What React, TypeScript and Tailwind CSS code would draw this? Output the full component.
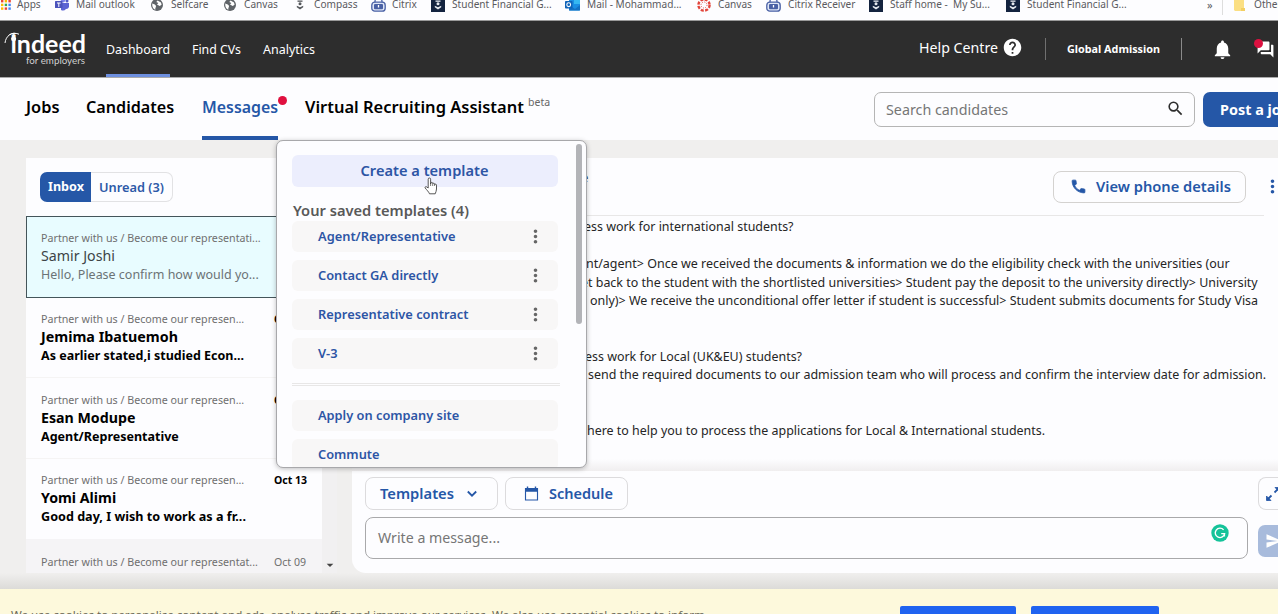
import type { ReactNode } from "react";
import { MdHelp, MdMoreVert, MdNotifications, MdQuestionAnswer, MdSearch, MdSend, MdArrowDropDown } from "react-icons/md";

function Globe() {
  return (
    <svg viewBox="0 0 12 12" className="size-3">
      <circle cx="6" cy="6" r="6" fill="#5f6368" />
      <path d="M1.2 4.5C3 5 5 5.6 5 7.2c0 1-1 1.6-.6 3.600C2.400 10.100 1 8.200 1.200 4.500ZM6.500 1.400 10 3.500l.6 2.200L8.700 7 6 5.500 7.400 4 5.300 3Z" fill="#fff" />
    </svg>
  );
}

function Apps() {
  const colors = ["#ea4335", "#fbbc04", "#ea4335", "#fbbc04", "#34a853", "#4285f4", "#fbbc04", "#ea4335", "#4285f4"];
  return (
    <svg viewBox="0 0 10 10" className="size-[10px]">
      {colors.map((c, i) => (
        <rect key={i} x={(i % 3) * 3.7} y={Math.floor(i / 3) * 3.7} width="2.4" height="2.4" fill={c} />
      ))}
    </svg>
  );
}

function Teams() {
  return (
    <svg viewBox="0 0 14 13" className="h-[13px] w-[14px]">
      <circle cx="12" cy="3" r="1.500" fill="#5059c9" />
      <circle cx="8" cy="2.200" r="2.200" fill="#7b83eb" />
      <path d="M6 5h8v4a3 3 0 0 1-3 2 4 4 0 0 1-5 1Z" fill="#5b63d3" />
      <rect y="3" width="7.500" height="7" rx=".6" fill="#4b53bc" />
      <path d="M2 5h3.600M3.800 5v4" stroke="#fff" />
    </svg>
  );
}

function Crest({ dark }: { dark?: boolean }) {
  return (
    <svg viewBox="0 0 14 14" className="size-[14px]">
      {dark && <rect width="14" height="14" fill="#13233f" />}
      <g fill={dark ? "#e6eaf0" : "#55585c"}>
        <rect x="4.500" y="2.500" width="5" height="1.300" />
        <circle cx="7" cy="5.800" r="1.500" />
        <path d="m3.800 7.800 3.200 1.400 3.200-1.400v1.500L7 11.500 3.800 9.300Z" />
      </g>
    </svg>
  );
}

function Lock() {
  return (
    <svg viewBox="0 0 15 14" className="h-[14px] w-[15px]">
      <path d="M4 5V3.500a3.500 3.500 0 0 1 7 0V5" fill="none" stroke="#6479b5" strokeWidth="1.500" />
      <rect x=".8" y="4.200" width="13.400" height="9" rx="3" fill="#dfe6f6" stroke="#4a61a5" strokeWidth="1.300" />
      <rect x="3" y="6" width="9" height="5.300" rx="1" fill="#4a61a5" />
      <path d="M7.500 7v2.500" stroke="#fff" strokeWidth="1.300" />
    </svg>
  );
}

function Outlook() {
  return (
    <svg viewBox="0 0 15 13" className="h-[13px] w-[15px]">
      <rect x="4" width="11" height="12.500" rx="1" fill="#1a8fe3" />
      <path d="M9 0h6v6H9Z" fill="#35b8f1" />
      <path d="m4 7 6 4 5-4v5.500H4Z" fill="#1272c4" />
      <rect y="3" width="7.500" height="7.500" rx=".8" fill="#0f63b8" />
      <circle cx="3.700" cy="6.700" r="1.900" fill="none" stroke="#fff" strokeWidth="1.100" />
    </svg>
  );
}

function CanvasLogo() {
  return (
    <svg viewBox="0 0 14 14" className="size-[14px]">
      <circle cx="7" cy="7" r="5.600" fill="none" stroke="#e2443a" strokeWidth="2.400" strokeDasharray="3 1.398" />
      <circle cx="7" cy="7" r="3" fill="none" stroke="#e2443a" strokeWidth="1" strokeDasharray="1 1.356" />
    </svg>
  );
}

function Folder() {
  return (
    <svg viewBox="0 0 12 13" className="h-[13px] w-3">
      <path d="M1 0h10v9l1 1v2H2l-1-1Z" fill="#fbdf83" />
      <path d="M8 12V9h4v3Z" fill="#f3cf62" />
    </svg>
  );
}

type Mark = { icon: ReactNode; label: string; cell: string; text: string };
const marks: Mark[] = [
  { icon: <Apps />, label: "Apps", cell: "w-[54px]", text: "ml-[6px]" },
  { icon: <Teams />, label: "Mail outlook", cell: "w-[96px]", text: "ml-[7px]" },
  { icon: <Globe />, label: "Selfcare", cell: "w-[73px]", text: "ml-[8px]" },
  { icon: <Globe />, label: "Canvas", cell: "w-[69px]", text: "ml-[8px]" },
  { icon: <Crest />, label: "Compass", cell: "w-[78px]", text: "ml-[7px]" },
  { icon: <Lock />, label: "Citrix", cell: "w-[60px]", text: "ml-[6px]" },
  { icon: <Crest dark />, label: "Student Financial G...", cell: "w-[134px]", text: "ml-[7px]" },
  { icon: <Outlook />, label: "Mail - Mohammad...", cell: "w-[132px]", text: "ml-[7px]" },
  { icon: <CanvasLogo />, label: "Canvas", cell: "w-[69px]", text: "ml-[7px]" },
  { icon: <Lock />, label: "Citrix Receiver", cell: "w-[103px]", text: "ml-[7px]" },
  { icon: <Crest dark />, label: "Staff home -  My Su...", cell: "w-[137px]", text: "ml-[7px]" },
  { icon: <Crest dark />, label: "Student Financial G...", cell: "w-[201px]", text: "ml-[7px]" },
];

function Bookmarks() {
  return (
    <div className="h-[21px] overflow-hidden border-b border-[#9a9a9a] bg-[#fdfdff]">
      <div className="-mt-[5px] flex h-[20px] items-center whitespace-pre pl-px text-[10.100px] text-[#5a5a5e]">
        {marks.map((m, i) => (
          <div key={i} className={`flex shrink-0 items-center ${m.cell}`}>
            <span className="shrink-0">{m.icon}</span>
            <span className={m.text}>{m.label}</span>
          </div>
        ))}
        <span className="w-[15px] shrink-0 text-[11px]">»</span>
        <span className="h-5 w-px shrink-0 bg-[#ddd]" />
        <span className="ml-[10px] shrink-0"><Folder /></span>
        <span className="ml-[9px] shrink-0">Other bookmarks</span>
      </div>
    </div>
  );
}

function Logo() {
  return (
    <svg viewBox="0 0 84 38" className="h-[38px] w-[84px]" fill="#fff">
      <path d="M1 12C1.800 5 7.500.2 15 3.200" fill="none" stroke="#fff" strokeWidth="1" />
      <path d="M4 5C7 1.200 11 .8 15 3.200 11 2.400 7 2.800 4 5Z" />
      <circle cx="9.600" cy="7.800" r="2.500" />
      <text x="6.500" y="22" textLength="75.500" lengthAdjust="spacingAndGlyphs" fontSize="24" fontWeight="700" fontFamily="Lato, sans-serif">indeed</text>
      <text x="22" y="33" textLength="59" lengthAdjust="spacingAndGlyphs" fontSize="9.500" fill="#cfcfcf" fontFamily="Lato, sans-serif">for employers</text>
    </svg>
  );
}

function TopNav() {
  return (
    <header className="flex h-[57px] items-stretch whitespace-nowrap border-b border-[#aaa] bg-[#2d2d2d] text-white">
      <div className="w-[106px] pl-1 pt-[10px]"><Logo /></div>
      <div className="flex w-[64px] items-center border-b-[3px] border-[#6d8fdf] text-[12.400px]"><span className="pt-[5px]">Dashboard</span></div>
      <div className="ml-[22px] flex w-[49px] items-center pt-[2px] text-[12.350px]">Find CVs</div>
      <div className="ml-[22px] flex items-center pt-[2px] text-[12.500px]">Analytics</div>
      <div className="ml-auto flex items-center">
        <div className="flex w-[126px] items-center text-[14.200px]">
          <span className="w-[83px] -translate-y-px">Help Centre</span>
          <MdHelp className="size-[21px] -translate-y-px" />
        </div>
        <span className="h-[22px] w-px bg-[#707070]" />
        <b className="ml-[21px] w-[93px] text-[10.800px] font-bold">Global Admission</b>
        <span className="ml-[21px] h-[22px] w-px bg-[#8a8a8a]" />
        <MdNotifications className="ml-[29px] size-[23px]" />
        <span className="relative ml-[22px] mr-[3px] block size-[19px]">
          <MdQuestionAnswer className="size-[19px]" />
          <i className="absolute -left-[2px] -top-px size-[9px] rounded-full bg-[#dc1140]" />
        </span>
      </div>
    </header>
  );
}

function SubNav() {
  return (
    <nav className="flex h-[62px] items-stretch whitespace-nowrap bg-[#fdfdff] pl-[26px] font-semibold leading-[58px] text-black">
      <span className="w-[60px] text-[16.400px]">Jobs</span>
      <span className="w-[116px] text-[16.150px]">Candidates</span>
      <span className="relative w-[76px] border-b-4 border-[#2557a7] text-[15.900px] text-[#2557a7]">
        Messages
        <i className="absolute -right-[9px] top-[18px] size-[9px] rounded-full bg-[#e0103f]" />
      </span>
      <span className="ml-[27px] w-[223px] text-[16.480px]">Virtual Recruiting Assistant</span>
      <span className="text-[10.500px] font-normal leading-[48px] text-[#666]">beta</span>
      <div className="ml-auto flex items-start pt-[14px] leading-normal">
        <div className="flex h-[35px] w-[321px] items-center justify-between rounded-[7px] border border-[#b5b5b5] pl-[11px] pr-[9px] text-[14.300px] font-normal text-[#767676]">
          <span className="pt-px">Search candidates</span>
          <MdSearch className="size-[19px] -translate-y-px text-[#2d2d2d]" />
        </div>
        <div className="ml-[8px] h-[35px] w-[75px] overflow-hidden rounded-l-[7px] bg-[#2557a7] pl-[17px] text-[14.400px] font-bold leading-[35px] text-white">Post a job</div>
      </div>
    </nav>
  );
}

type Conversation = { subject: string; name: string; preview: string; date: string; unread: boolean; box: string; nameSize: string; previewSize: string };
const conversations: Conversation[] = [
  { subject: "Partner with us / Become our representati...", name: "Samir Joshi", preview: "Hello, Please confirm how would yo...", date: "", unread: false, box: "h-[82px] border border-[#44555a] bg-[#e8fcff] pl-[14px] pt-[12px]", nameSize: "text-[14.200px]", previewSize: "text-[12.480px]" },
  { subject: "Partner with us / Become our represen...", name: "Jemima Ibatuemoh", preview: "As earlier stated,i studied Econ...", date: "Oct 13", unread: true, box: "h-[80px] border-b border-[#f5f4f4] pl-[15px] pt-[12px]", nameSize: "text-[14.290px]", previewSize: "text-[12.500px]" },
  { subject: "Partner with us / Become our represen...", name: "Esan Modupe", preview: "Agent/Representative", date: "Oct 13", unread: true, box: "h-[81px] border-b border-[#f5f4f4] pl-[15px] pt-[13px]", nameSize: "text-[14.200px]", previewSize: "text-[12.530px]" },
  { subject: "Partner with us / Become our represen...", name: "Yomi Alimi", preview: "Good day, I wish to work as a fr...", date: "Oct 13", unread: true, box: "h-[80px] pl-[15px] pt-[12px]", nameSize: "text-[14.200px]", previewSize: "text-[12.610px]" },
  { subject: "Partner with us / Become our representat...", name: "", preview: "", date: "Oct 09", unread: false, box: "h-[34px] bg-[#f5f4f6] pl-[15px] pt-[14px]", nameSize: "text-[14px]", previewSize: "text-[12px]" },
];

function Inbox() {
  return (
    <aside className="h-[415px] w-[296px] shrink-0 overflow-hidden whitespace-nowrap bg-[#fdfdff]">
      <div className="flex h-[58px] items-start pl-[14px] pt-[14px]">
        <div className="flex h-[30px] w-[133px] leading-[28px]">
          <b className="w-[51px] rounded-l-[7px] bg-[#2557a7] pl-[8px] text-[12.610px] font-bold leading-[30px] text-white">Inbox</b>
          <span className="flex-1 rounded-r-[7px] border border-l-0 border-[#e2e2e4] pl-[8px] text-[12.810px] font-semibold text-[#2d5aa8]">Unread (3)</span>
        </div>
      </div>
      {conversations.map((c, i) => (
        <div key={i} className={`overflow-hidden ${c.box}`}>
          <div className="flex h-[18px] items-center text-[10.700px] text-[#6f6f6f]">
            <span className="w-[233px] shrink-0">{c.subject}</span>
            <span className={c.unread ? "pt-[2px] text-[10.500px] font-bold text-black" : "pt-[2px] text-[10.570px]"}>{c.date}</span>
          </div>
          <div className={`h-[17px] leading-[17px] ${c.nameSize} ${c.unread ? "font-bold text-black" : "text-[#3d4447]"}`}>{c.name}</div>
          <div className={`h-[22px] leading-[22px] ${c.previewSize} ${c.unread ? "font-bold text-black" : "text-[#6b7376]"}`}>{c.preview}</div>
        </div>
      ))}
    </aside>
  );
}

const lines: { text: string; className: string }[] = [
  { text: "ess work for international students?", className: "pl-[232px]" },
  { text: "", className: "" },
  { text: "nt/agent> Once we received the documents & information we do the eligibility check with the universities (our", className: "pl-[234px] text-[12.490px]" },
  { text: "et back to the student with the shortlisted universities> Student pay the deposit to the university directly> University", className: "pl-[229px]" },
  { text: "only)> We receive the unconditional offer letter if student is successful> Student submits documents for Study Visa", className: "pl-[238px] text-[12.480px]" },
  { text: "", className: "" },
  { text: "", className: "" },
  { text: "ess work for Local (UK&EU) students?", className: "pl-[233px]" },
  { text: "send the required documents to our admission team who will process and confirm the interview date for admission.", className: "pl-[236px] text-[12.480px]" },
  { text: "", className: "" },
  { text: "", className: "" },
  { text: "here to help you to process the applications for Local & International students.", className: "pl-[235px]" },
];

function Thread() {
  return (
    <main className="flex h-[415px] w-[926px] shrink-0 flex-col overflow-hidden whitespace-nowrap rounded-bl-[14px] bg-[#fdfdff]">
      <div className="flex h-[57px] shrink-0 items-center justify-end">
        <span className="mr-auto pb-[17px] pl-[229px] text-[13px] text-[#333]">e</span>
        <div className="flex h-[32px] w-[193px] items-center rounded-[8px] border border-[#d4d2d0] pl-[16px] text-[14.680px] font-semibold text-[#2557a7]">
          <svg viewBox="0 0 24 24" className="mr-[9px] size-[17px]" fill="currentColor" stroke="currentColor" strokeWidth="1.200"><path d="M6.620 10.790c1.440 2.830 3.760 5.140 6.590 6.590l2.200-2.200c.27-.27.67-.36 1.020-.24 1.120.37 2.330.57 3.570.57.55 0 1 .45 1 1V20c0 .55-.45 1-1 1C10.610 21 3 13.390 3 4c0-.55.45-1 1-1h3.500c.55 0 1 .45 1 1 0 1.250.2 2.450.57 3.570.11.35.03.74-.25 1.020l-2.200 2.200Z" /></svg>
          View phone details
        </div>
        <MdMoreVert className="-mr-[5px] ml-[16px] size-[21px] text-[#2557a7]" />
      </div>
      <div className="mr-[14px] h-px shrink-0 bg-[#e8e7e7]" />
      <div className="h-[243px] shrink-0 pt-[2px] text-[12.450px] text-[#252525]">
        {lines.map((l, i) => (
          <div key={i} className={`h-[18.500px] leading-[18.500px] ${l.className}`}>{l.text}</div>
        ))}
      </div>
      <div className="h-[12px] shrink-0 bg-linear-to-b from-[#fdfdff] to-[#f0eeef]" />
      <div className="flex h-[39px] shrink-0 items-start pl-[13px] pt-[6px] text-[#2557a7]">
        <div className="flex h-[33px] w-[133px] items-center rounded-[8px] border border-[#dcdbdd] pl-[14px] text-[14.740px] font-semibold">
          Templates
          <svg viewBox="0 0 12 8" className="ml-[12px] h-[8px] w-3"><path d="m1.800 1.500 4.200 4.200 4.200-4.200" fill="none" stroke="currentColor" strokeWidth="1.800" /></svg>
        </div>
        <div className="ml-[7px] flex h-[33px] w-[123px] items-center rounded-[8px] border border-[#dcdbdd] pl-[18px] text-[14.520px] font-semibold">
          <svg viewBox="0 0 16 16" className="mr-[10px] size-[15px]" fill="currentColor"><path d="M1 2h2V.5h1.500V2h7V.5H13V2h2v13.500H1ZM2.200 6v8.400h11.600V6Z" fillRule="evenodd" /></svg>
          Schedule
        </div>
        <div className="ml-auto flex h-[33px] w-[20px] items-center overflow-hidden rounded-l-[8px] border border-r-0 border-[#dcdbdd] pl-[6px]">
          <svg viewBox="0 0 16 16" className="size-[16px] shrink-0" fill="currentColor" stroke="currentColor" strokeWidth="1.800"><path d="m9.500 6.500 4.500-4.500M6.500 9.500 2 14" /><path d="M10 1.500h4.500V6ZM6 14.500H1.500V10Z" strokeWidth=".8" /></svg>
        </div>
      </div>
      <div className="flex shrink-0 pl-[13px] pt-[7px]">
        <div className="flex h-[42px] w-[883px] items-center justify-between rounded-[8px] border border-[#a9a9ab] pl-[12px] pr-[18px] text-[14.190px] text-[#767676]">
          <span>Write a message...</span>
          <svg viewBox="0 0 18 18" className="size-[18px] -translate-y-[5px]"><circle cx="9" cy="9" r="8.700" fill="#15c39a" /><path d="M12.600 5.900A4.700 4.700 0 1 0 13.600 9.600H10.200M13.400 9.600v3" fill="none" stroke="#fff" strokeWidth="1.400" /></svg>
        </div>
        <div className="ml-[10px] mt-[8px] flex h-[32px] w-[20px] items-center overflow-hidden rounded-l-[7px] bg-[#a8bbdc] pl-[7px]">
          <MdSend className="size-[18px] shrink-0 text-white" />
        </div>
      </div>
    </main>
  );
}

function TemplateRow({ label, menu, size }: { label: string; menu?: boolean; size: string }) {
  return (
    <div className="mb-[8px] flex h-[31px] w-[266px] shrink-0 items-center justify-between rounded-[6px] bg-[#f8f7f7] pl-[26px] pr-[12px] font-semibold text-[#2d55a5]">
      <span className={size}>{label}</span>
      {menu && <MdMoreVert className="size-[21px] text-[#666]" />}
    </div>
  );
}

function TemplatesPopup() {
  return (
    <section className="absolute left-[276px] top-[140px] flex h-[328px] w-[311px] flex-col overflow-hidden whitespace-nowrap rounded-[7px] border border-[#a8a8ab] bg-[#fdfdff] pl-[15px] pt-[14px] shadow-[0_1px_5px_rgba(0,0,0,0.25)]">
      <div className="flex h-[32px] w-[266px] shrink-0 items-center justify-center rounded-[6px] bg-[#eceefd] pr-px text-[14.620px] font-semibold text-[#2d55a5]">Create a template</div>
      <div className="h-[34px] shrink-0 pl-px pt-[13px] text-[14.660px] font-semibold leading-[20px] text-[#595959]">Your saved templates (4)</div>
      <TemplateRow label="Agent/Representative" menu size="text-[12.850px]" />
      <TemplateRow label="Contact GA directly" menu size="text-[12.850px]" />
      <TemplateRow label="Representative contract" menu size="text-[12.850px]" />
      <TemplateRow label="V-3" menu size="text-[12.850px]" />
      <div className="mb-[14px] mt-[6px] h-[3px] w-[268px] shrink-0 border-y border-[#e8e7e7]" />
      <TemplateRow label="Apply on company site" size="text-[12.800px]" />
      <TemplateRow label="Commute" size="text-[12.800px]" />
      <i className="absolute right-[4px] top-[3px] h-[180px] w-[6px] rounded-full bg-[#b3b4b8]" />
    </section>
  );
}

function Pointer() {
  return (
    <svg viewBox="0 0 14 18" className="absolute left-[424px] top-[177px] h-[18px] w-[14px]">
      <path d="M4.200 11V2.200a1.200 1.200 0 0 1 2.400 0V7l.2-1a1 1 0 0 1 1.900.2v.6a1 1 0 0 1 1.900.2v.7a1 1 0 0 1 1.900.4V12c0 2-.8 3-1.300 4.800H5.500C4.800 14.800 2.500 12.800 1.200 11c-.6-1 .6-1.800 1.500-1.100Z" fill="#fff" stroke="#444" strokeWidth=".9" />
      <path d="M6.600 6v3M8.700 7v2M10.600 7.500V9" stroke="#444" strokeWidth=".7" />
    </svg>
  );
}

export default function App() {
  return (
    <div className="relative h-[614px] w-[1278px] overflow-hidden bg-[#f0efee] font-['Noto_Sans',sans-serif]">
      <Bookmarks />
      <TopNav />
      <SubNav />
      <div className="flex h-[433px] pl-[26px] pt-[18px]">
        <Inbox />
        <div className="flex w-[15px] shrink-0 items-end bg-[#f1f0f1]"><MdArrowDropDown className="size-[16px] shrink-0 text-[#444]" /></div>
        <div className="w-[15px] shrink-0" />
        <Thread />
      </div>
      <div className="h-[16px] bg-linear-to-b from-[#f0efee] to-[#dcdbd8]" />
      <footer className="flex h-[25px] items-start justify-between overflow-hidden bg-[#fdf9dc] pl-[11px] pr-[119px]">
        <p className="whitespace-nowrap pt-[18px] text-[11.570px] leading-[16px] text-[#6b6858]">We use cookies to personalise content and ads, analyse traffic and improve our services. We also use essential cookies to inform</p>
        <div className="flex gap-[15px] pt-[17px]">
          <div className="h-[34px] w-[116px] rounded-[2px] bg-[#1f63f0]" />
          <div className="h-[34px] w-[128px] rounded-[2px] bg-[#1f63f0]" />
        </div>
      </footer>
      <TemplatesPopup />
      <Pointer />
    </div>
  );
}
